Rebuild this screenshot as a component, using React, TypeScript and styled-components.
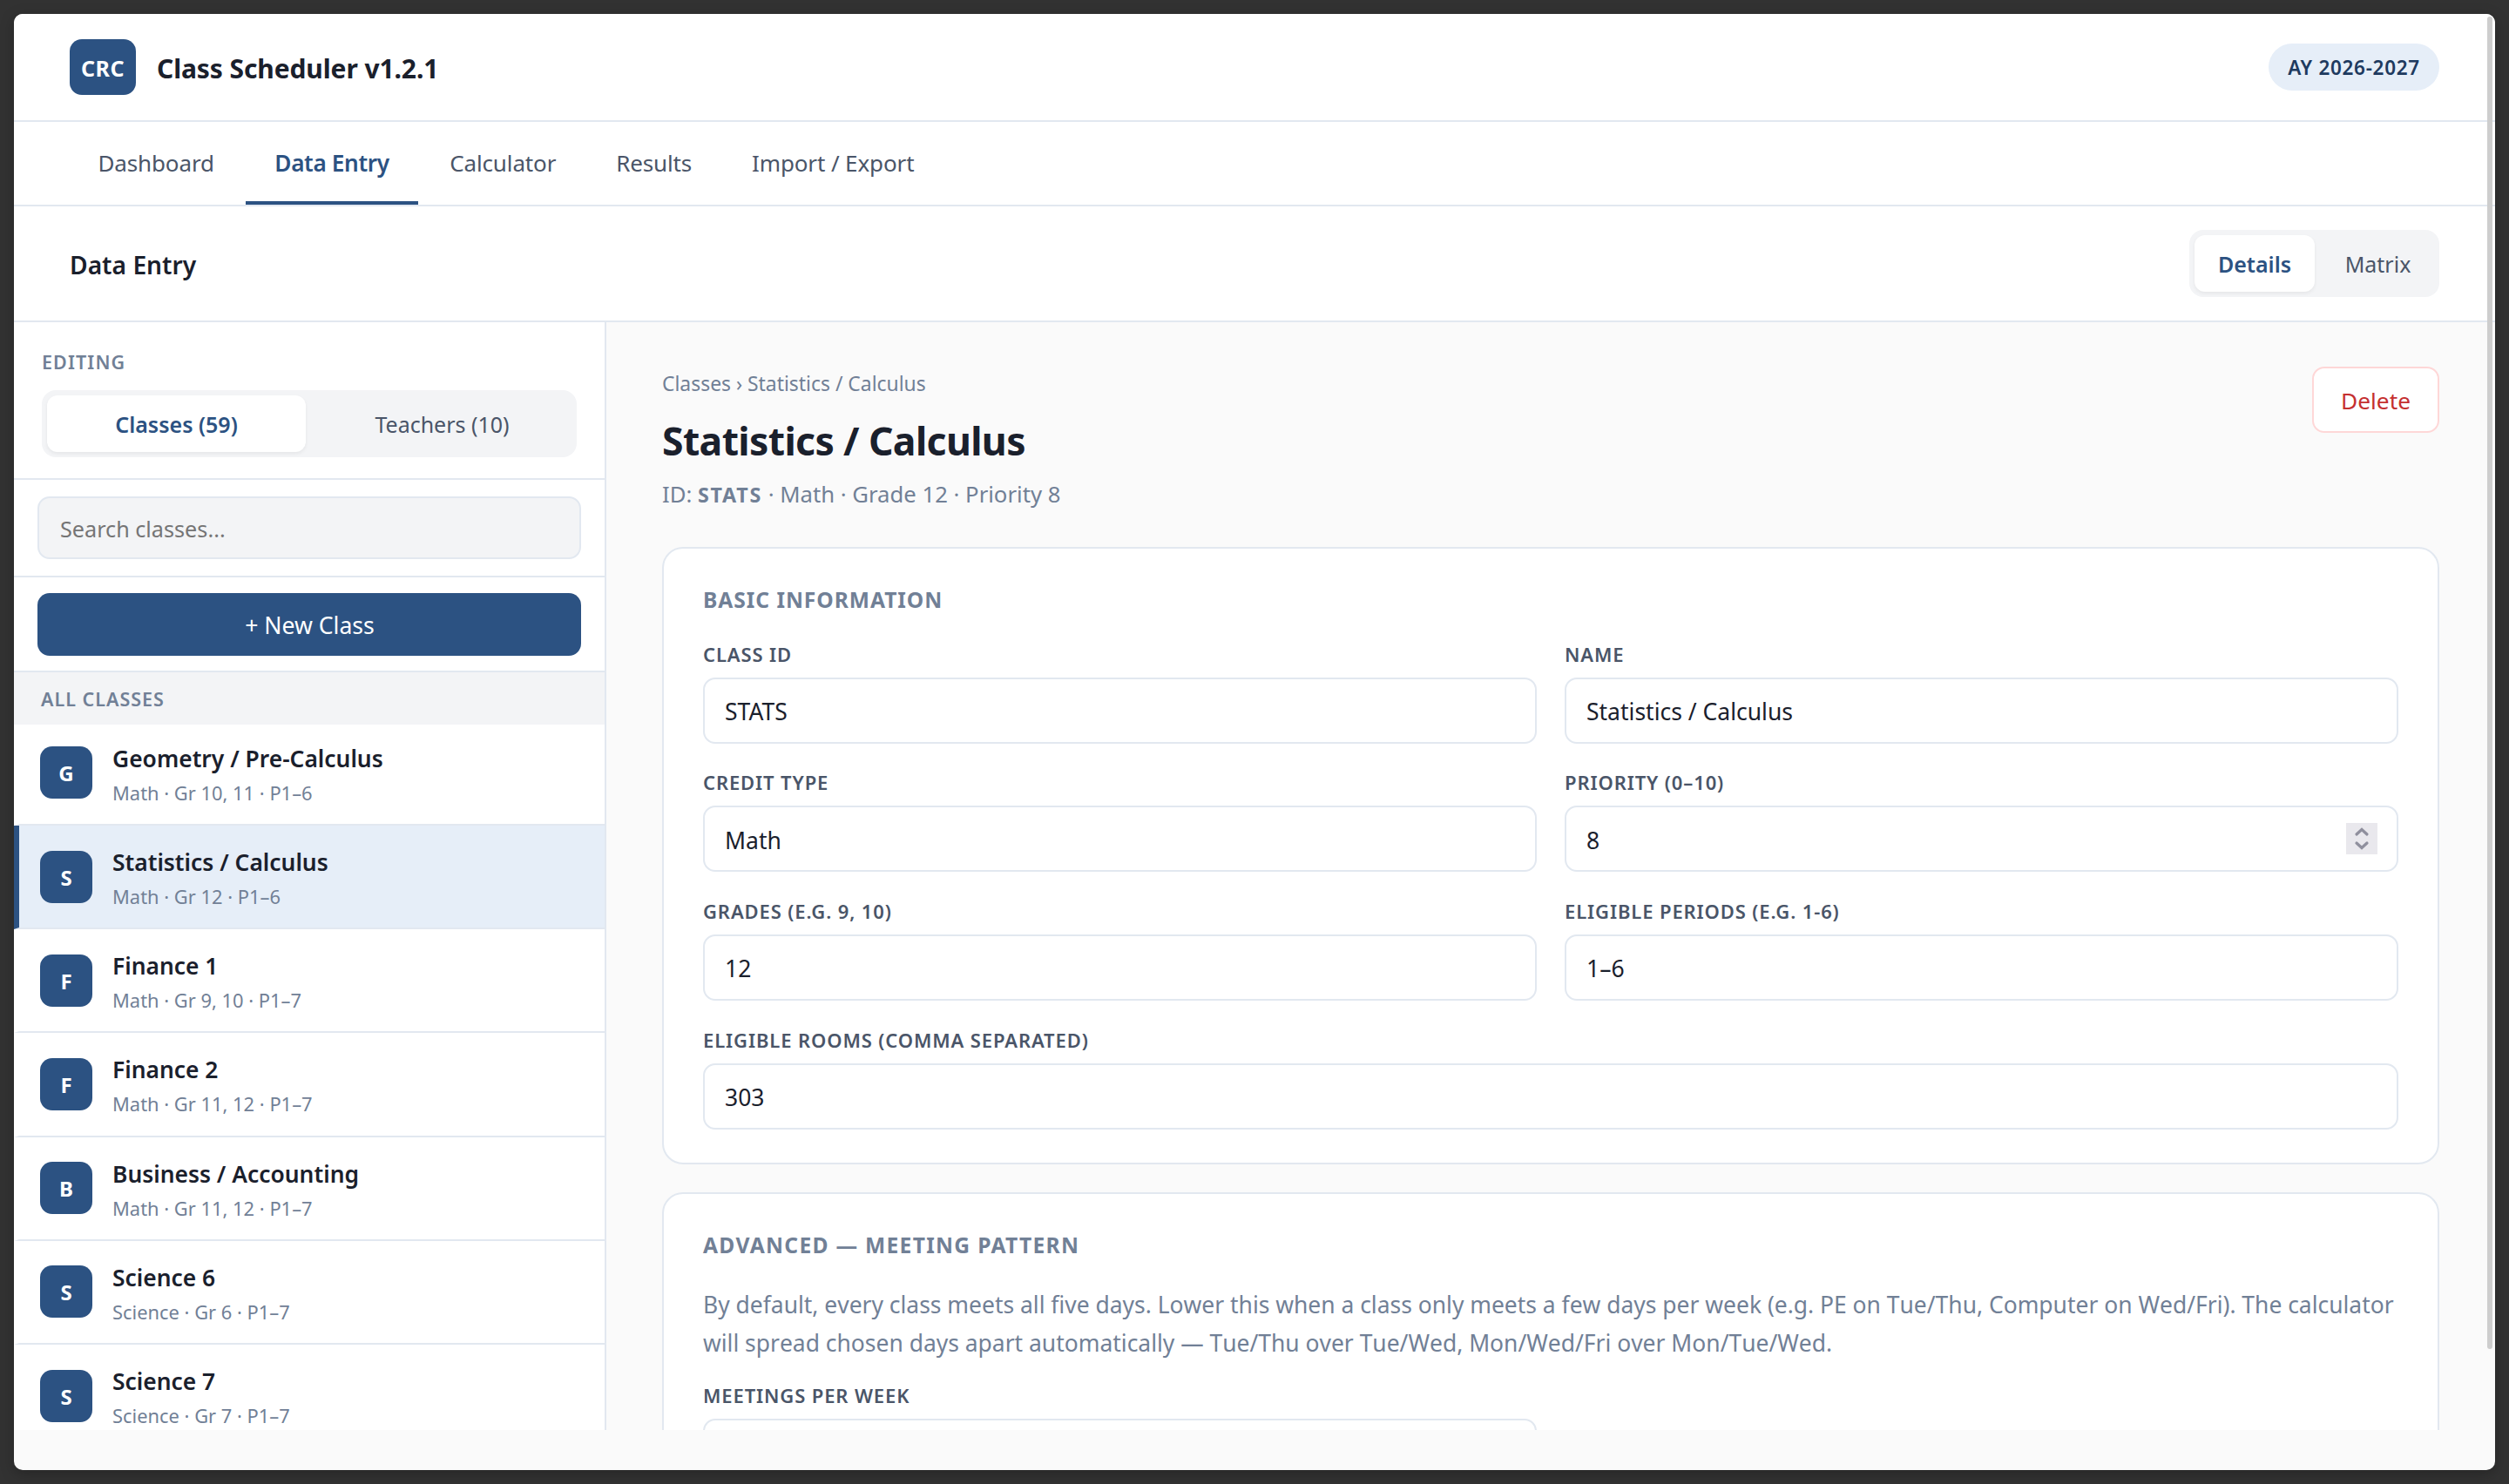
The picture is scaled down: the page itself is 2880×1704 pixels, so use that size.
import React from "react";
import styled, { createGlobalStyle, ThemeProvider } from "styled-components";

const theme = {
  colors: {
    primary: "#2c5282",
    primaryDark: "#1e3a5f",
    primaryLight: "#e6eef8",
    text1: "#1a202c",
    text2: "#4a5568",
    text3: "#718096",
    border: "#e2e8f0",
    surface: "#ffffff",
    muted: "#f3f4f6",
    background: "#fafafa",
    danger: "#c53030",
    dangerBorder: "#fed7d7",
  },
};

const GlobalStyle = createGlobalStyle`
  * {
    box-sizing: border-box;
  }
  body {
    margin: 0;
    background: #323232;
    font-family: "Noto Sans", "Open Sans", sans-serif;
    color: ${theme.colors.text1};
  }
  button, input {
    font-family: inherit;
  }
`;

const Desktop = styled.div`
  height: 1704px;
  padding: 16px;
  background: #323232;
`;
const AppWindow = styled.div`
  position: relative;
  display: flex;
  flex-direction: column;
  height: 1672px;
  overflow: hidden;
  border-radius: 10px;
  background: ${(props) => props.theme.colors.background};
  box-shadow: 0 4px 16px rgba(0, 0, 0, 0.25);
`;
const ScrollThumb = styled.div`
  position: absolute;
  top: 3px;
  right: 3px;
  width: 6px;
  height: 1530px;
  border-radius: 3px;
  background: #cdcdcd;
`;

const Header = styled.header`
  display: flex;
  flex: none;
  align-items: center;
  height: 124px;
  padding: 0 64px;
  border-bottom: 2px solid ${(props) => props.theme.colors.border};
  background: ${(props) => props.theme.colors.surface};
`;
const Logo = styled.div`
  display: flex;
  align-items: center;
  justify-content: center;
  width: 76px;
  height: 64px;
  padding-top: 1px;
  border-radius: 14px;
  background: ${(props) => props.theme.colors.primary};
  color: #fff;
  font-size: 25px;
  font-weight: 700;
  letter-spacing: 0.5px;
`;
const AppTitle = styled.div`
  margin-left: 24px;
  padding-top: 2px;
  font-size: 30px;
  font-weight: 700;
  letter-spacing: -0.1px;
`;
const YearBadge = styled.div`
  display: flex;
  align-items: center;
  justify-content: center;
  width: 196px;
  height: 54px;
  margin-left: auto;
  padding-top: 1px;
  border-radius: 27px;
  background: ${(props) => props.theme.colors.primaryLight};
  color: ${(props) => props.theme.colors.primaryDark};
  font-size: 22.5px;
  font-weight: 600;
  letter-spacing: 0.7px;
`;

const Nav = styled.nav`
  display: flex;
  flex: none;
  gap: 4px;
  height: 97px;
  padding: 0 64px;
  border-bottom: 2px solid ${(props) => props.theme.colors.border};
  background: ${(props) => props.theme.colors.surface};
`;
const NavTab = styled.a<{ $active?: boolean }>`
  display: flex;
  align-items: center;
  padding: 2px ${(props) => (props.$active ? 33 : 32.4)}px 0;
  border-bottom: 4px solid
    ${(props) => (props.$active ? props.theme.colors.primary : "transparent")};
  color: ${(props) =>
    props.$active ? props.theme.colors.primary : props.theme.colors.text2};
  font-size: ${(props) => (props.$active ? 26.2 : 26)}px;
  font-weight: ${(props) => (props.$active ? 600 : 400)};
  letter-spacing: ${(props) => (props.$active ? "-0.35px" : "-0.12px")};
`;

const SubHeader = styled.div`
  display: flex;
  flex: none;
  align-items: center;
  justify-content: space-between;
  height: 133px;
  padding: 0 64px;
  border-bottom: 2px solid ${(props) => props.theme.colors.border};
  background: ${(props) => props.theme.colors.surface};
`;
const PageTitle = styled.h2`
  margin: 0;
  padding-top: 3px;
  font-size: 28.2px;
  font-weight: 600;
`;

const Segmented = styled.div`
  display: flex;
  gap: 8px;
  height: 77px;
  padding: 6px;
  border-radius: 16px;
  background: ${(props) => props.theme.colors.muted};
`;
const Segment = styled.button<{ $active?: boolean; $width?: number }>`
  flex: ${(props) => (props.$width ? "none" : "1 1 0")};
  width: ${(props) => (props.$width ? `${props.$width}px` : "auto")};
  padding: 0;
  border: none;
  border-radius: 12px;
  background: ${(props) =>
    props.$active ? props.theme.colors.surface : "transparent"};
  box-shadow: ${(props) =>
    props.$active ? "0 2px 4px rgba(0, 0, 0, 0.06)" : "none"};
  color: ${(props) =>
    props.$active ? props.theme.colors.primary : props.theme.colors.text2};
  font-size: 25px;
  font-weight: ${(props) => (props.$active ? 600 : 400)};
`;

const Body = styled.div`
  display: flex;
  flex: none;
  height: 1272px;
  overflow: hidden;
`;
const Sidebar = styled.aside`
  display: flex;
  flex: none;
  flex-direction: column;
  width: 680px;
  border-right: 2px solid ${(props) => props.theme.colors.border};
  background: ${(props) => props.theme.colors.surface};
`;
const EditingBlock = styled.div`
  flex: none;
  height: 181px;
  padding: 30px 32px 0;
  border-bottom: 2px solid ${(props) => props.theme.colors.border};
`;
const Overline = styled.div`
  height: 48px;
  color: ${(props) => props.theme.colors.text3};
  font-size: 21.5px;
  font-weight: 600;
  line-height: 32px;
  letter-spacing: 1.1px;
`;
const SearchBlock = styled.div`
  flex: none;
  height: 112px;
  padding: 19px 27px 0;
  border-bottom: 2px solid ${(props) => props.theme.colors.border};
`;
const SearchInput = styled.input`
  display: block;
  width: 100%;
  height: 72px;
  padding: 1px 24px 0;
  border: 2px solid ${(props) => props.theme.colors.border};
  border-radius: 14px;
  background: ${(props) => props.theme.colors.muted};
  font-size: 25.2px;

  &::placeholder {
    color: #757575;
  }
`;
const ActionBlock = styled.div`
  flex: none;
  height: 109px;
  padding: 18px 27px 0;
  border-bottom: 2px solid ${(props) => props.theme.colors.border};
`;
const PrimaryButton = styled.button`
  width: 100%;
  height: 72px;
  padding: 2px 0 0 1px;
  border: none;
  border-radius: 14px;
  background: ${(props) => props.theme.colors.primary};
  color: #fff;
  font-size: 26.6px;
`;
const ListHeader = styled.div`
  position: relative;
  z-index: 1;
  flex: none;
  height: 60px;
  margin-bottom: -3.2px;
  padding: 15px 31px;
  background: ${(props) => props.theme.colors.muted};
  color: ${(props) => props.theme.colors.text3};
  font-size: 21.5px;
  font-weight: 600;
  line-height: 32px;
  letter-spacing: 1px;
`;
const ListItem = styled.div<{ $selected?: boolean }>`
  display: flex;
  flex: none;
  align-items: center;
  gap: 23px;
  height: 119.2px;
  padding-left: 24px;
  border-left: 6px solid
    ${(props) => (props.$selected ? props.theme.colors.primary : "transparent")};
  border-bottom: 2px solid ${(props) => props.theme.colors.border};
  background: ${(props) =>
    props.$selected ? props.theme.colors.primaryLight : "transparent"};
`;
const Avatar = styled.div`
  display: flex;
  align-items: center;
  justify-content: center;
  width: 60px;
  height: 60px;
  padding-top: 1px;
  border-radius: 14px;
  background: ${(props) => props.theme.colors.primary};
  color: #fff;
  font-size: 24px;
  font-weight: 700;
`;
const ItemName = styled.div`
  padding-top: 4px;
  font-size: 26.4px;
  font-weight: 600;
  line-height: 42px;
`;
const ItemMeta = styled.div`
  color: ${(props) => props.theme.colors.text3};
  font-size: 21.9px;
  line-height: 37px;
`;

const Main = styled.main`
  flex: 1;
  padding: 51px 64px 0;
`;
const DetailHeader = styled.div`
  display: flex;
  align-items: flex-start;
  justify-content: space-between;
  height: 207px;
`;
const Breadcrumb = styled.div`
  padding-top: 2px;
  color: ${(props) => props.theme.colors.text3};
  font-size: 22.9px;
  line-height: 36px;
`;
const DetailTitle = styled.h1`
  margin: 17px 0 12px;
  font-size: 44.5px;
  font-weight: 700;
  line-height: 60px;
  letter-spacing: -0.62px;
`;
const DetailMeta = styled.div`
  color: ${(props) => props.theme.colors.text3};
  font-size: 25.7px;
  line-height: 40px;
`;
const ClassCode = styled.strong`
  font-size: 23.3px;
  letter-spacing: 1.7px;
`;
const DeleteButton = styled.button`
  width: 146px;
  height: 76px;
  padding: 2px 0 0;
  border: 2px solid ${(props) => props.theme.colors.dangerBorder};
  border-radius: 14px;
  background: ${(props) => props.theme.colors.surface};
  color: ${(props) => props.theme.colors.danger};
  font-size: 26.3px;
`;

const Card = styled.section`
  margin-bottom: 32px;
  padding: 41px 45px 38.6px;
  border: 2px solid ${(props) => props.theme.colors.border};
  border-radius: 24px;
  background: ${(props) => props.theme.colors.surface};
`;
const CardTitle = styled.h3<{ $spacing?: number }>`
  margin: 0;
  color: ${(props) => props.theme.colors.text3};
  font-size: 24.6px;
  font-weight: 700;
  line-height: 36px;
  letter-spacing: ${(props) => props.$spacing ?? 0.95}px;
`;
const CardText = styled.p`
  margin: 28px 0 -6px;
  color: ${(props) => props.theme.colors.text3};
  font-size: 26.45px;
  font-kerning: none;
  line-height: 44px;
`;
const FieldGrid = styled.div`
  display: grid;
  grid-template-columns: 1fr 1fr;
  gap: 28.6px 32px;
  margin-top: 27.8px;
`;
const Field = styled.label<{ $wide?: boolean }>`
  display: flex;
  flex-direction: column;
  gap: 11px;
  grid-column: ${(props) => (props.$wide ? "1 / -1" : "auto")};
`;
const FieldLabel = styled.span`
  color: ${(props) => props.theme.colors.text2};
  font-size: 22px;
  font-weight: 600;
  line-height: 32px;
  letter-spacing: 0.88px;
`;
const FieldBox = styled.div`
  display: flex;
  align-items: center;
  height: 76px;
  padding: 0 22px 0 23px;
  border: 2px solid ${(props) => props.theme.colors.border};
  border-radius: 14px;
  background: ${(props) => props.theme.colors.surface};
`;
const FieldInput = styled.input`
  flex: 1;
  min-width: 0;
  padding: 3px 0 0;
  border: none;
  outline: none;
  background: transparent;
  color: ${(props) => props.theme.colors.text1};
  font-size: 26.5px;
`;
const Spinner = styled.svg`
  flex: none;
  width: 36px;
  height: 36px;
  background: #e9e8ed;
`;

type ClassItem = { name: string; meta: string };
type FieldItem = {
  label: string;
  value: string;
  wide?: boolean;
  stepper?: boolean;
};

const tabs = [
  "Dashboard",
  "Data Entry",
  "Calculator",
  "Results",
  "Import / Export",
];

const classes: ClassItem[] = [
  { name: "Geometry / Pre-Calculus", meta: "Math · Gr 10, 11 · P1–6" },
  { name: "Statistics / Calculus", meta: "Math · Gr 12 · P1–6" },
  { name: "Finance 1", meta: "Math · Gr 9, 10 · P1–7" },
  { name: "Finance 2", meta: "Math · Gr 11, 12 · P1–7" },
  { name: "Business / Accounting", meta: "Math · Gr 11, 12 · P1–7" },
  { name: "Science 6", meta: "Science · Gr 6 · P1–7" },
  { name: "Science 7", meta: "Science · Gr 7 · P1–7" },
];

const basicFields: FieldItem[] = [
  { label: "CLASS ID", value: "STATS" },
  { label: "NAME", value: "Statistics / Calculus" },
  { label: "CREDIT TYPE", value: "Math" },
  { label: "PRIORITY (0–10)", value: "8", stepper: true },
  { label: "GRADES (E.G. 9, 10)", value: "12" },
  { label: "ELIGIBLE PERIODS (E.G. 1-6)", value: "1–6" },
  { label: "ELIGIBLE ROOMS (COMMA SEPARATED)", value: "303", wide: true },
];

const FormField = ({ label, value, wide, stepper }: FieldItem) => (
  <Field $wide={wide}>
    <FieldLabel>{label}</FieldLabel>
    <FieldBox>
      <FieldInput defaultValue={value} />
      {stepper && (
        <Spinner viewBox="0 0 36 36" fill="none" stroke="#8f8f9d" strokeWidth="3.2">
          <path d="M12 13 18 7.5 24 13" strokeLinecap="round" />
          <path d="M12 23 18 28.5 24 23" strokeLinecap="round" />
        </Spinner>
      )}
    </FieldBox>
  </Field>
);

const App = () => {
  const selected = "Statistics / Calculus";

  return (
    <ThemeProvider theme={theme}>
      <GlobalStyle />
      <Desktop>
        <AppWindow>
          <Header>
            <Logo>CRC</Logo>
            <AppTitle>Class Scheduler v1.2.1</AppTitle>
            <YearBadge>AY 2026-2027</YearBadge>
          </Header>
          <Nav>
            {tabs.map((tab) => (
              <NavTab key={tab} $active={tab === "Data Entry"}>
                {tab}
              </NavTab>
            ))}
          </Nav>
          <SubHeader>
            <PageTitle>Data Entry</PageTitle>
            <Segmented>
              <Segment $active $width={138}>
                Details
              </Segment>
              <Segment $width={129}>Matrix</Segment>
            </Segmented>
          </SubHeader>
          <Body>
            <Sidebar>
              <EditingBlock>
                <Overline>EDITING</Overline>
                <Segmented>
                  <Segment $active>Classes (59)</Segment>
                  <Segment>Teachers (10)</Segment>
                </Segmented>
              </EditingBlock>
              <SearchBlock>
                <SearchInput placeholder="Search classes..." />
              </SearchBlock>
              <ActionBlock>
                <PrimaryButton>+ New Class</PrimaryButton>
              </ActionBlock>
              <ListHeader>ALL CLASSES</ListHeader>
              {classes.map((item) => (
                <ListItem key={item.name} $selected={item.name === selected}>
                  <Avatar>{item.name[0]}</Avatar>
                  <div>
                    <ItemName>{item.name}</ItemName>
                    <ItemMeta>{item.meta}</ItemMeta>
                  </div>
                </ListItem>
              ))}
            </Sidebar>
            <Main>
              <DetailHeader>
                <div>
                  <Breadcrumb>Classes › Statistics / Calculus</Breadcrumb>
                  <DetailTitle>{selected}</DetailTitle>
                  <DetailMeta>
                    ID: <ClassCode>STATS</ClassCode> · Math · Grade 12 · Priority
                    8
                  </DetailMeta>
                </div>
                <DeleteButton>Delete</DeleteButton>
              </DetailHeader>
              <Card>
                <CardTitle>BASIC INFORMATION</CardTitle>
                <FieldGrid>
                  {basicFields.map((field) => (
                    <FormField key={field.label} {...field} />
                  ))}
                </FieldGrid>
              </Card>
              <Card>
                <CardTitle $spacing={1.3}>ADVANCED — MEETING PATTERN</CardTitle>
                <CardText>
                  By default, every class meets all five days. Lower this when a
                  class only meets a few days per week (e.g. PE on Tue/Thu,
                  Computer on Wed/Fri). The calculator will spread chosen days
                  apart automatically — Tue/Thu over Tue/Wed, Mon/Wed/Fri over
                  Mon/Tue/Wed.
                </CardText>
                <FieldGrid>
                  <FormField label="MEETINGS PER WEEK" value="5" />
                </FieldGrid>
              </Card>
            </Main>
          </Body>
          <ScrollThumb />
        </AppWindow>
      </Desktop>
    </ThemeProvider>
  );
};

export default App;
